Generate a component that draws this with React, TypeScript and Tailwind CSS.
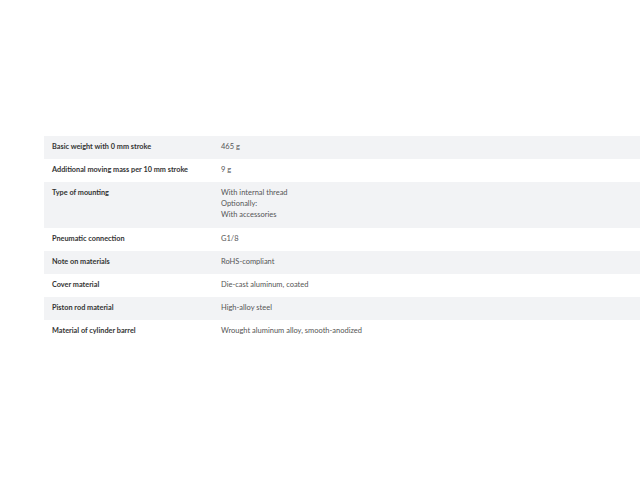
import React from 'react';

const rows: { label: string; value: string[] }[] = [
  { label: 'Basic weight with 0 mm stroke', value: ['465 g'] },
  { label: 'Additional moving mass per 10 mm stroke', value: ['9 g'] },
  { label: 'Type of mounting', value: ['With internal thread', 'Optionally:', 'With accessories'] },
  { label: 'Pneumatic connection', value: ['G1/8'] },
  { label: 'Note on materials', value: ['RoHS-compliant'] },
  { label: 'Cover material', value: ['Die-cast aluminum, coated'] },
  { label: 'Piston rod material', value: ['High-alloy steel'] },
  { label: 'Material of cylinder barrel', value: ['Wrought aluminum alloy, smooth-anodized'] },
];

const App: React.FC = () => {
  return (
    <div className="w-[640px] h-[480px] bg-white overflow-hidden pt-[136px] pl-[44px]" style={{ fontFamily: 'Lato, "Open Sans", sans-serif' }}>
      <table className="w-[620px] border-collapse leading-[11px]">
        <tbody>
          {rows.map((row, index) => (
            <tr key={row.label} className={index % 2 === 0 ? 'bg-[#f2f3f5]' : 'bg-white'}>
              <td className="w-[169px] pl-2 pt-[5px] pb-[7px] align-top font-bold text-[7.3px] text-[#333333]">
                {row.label}
              </td>
              <td className={`pl-2 pt-[5px] align-top text-[7.5px] text-[#555555] ${row.value.length > 1 ? 'pb-[8px]' : 'pb-[7px]'}`}>
                {row.value.map((line) => (
                  <div key={line}>{line}</div>
                ))}
              </td>
            </tr>
          ))}
        </tbody>
      </table>
    </div>
  );
};

export default App;
